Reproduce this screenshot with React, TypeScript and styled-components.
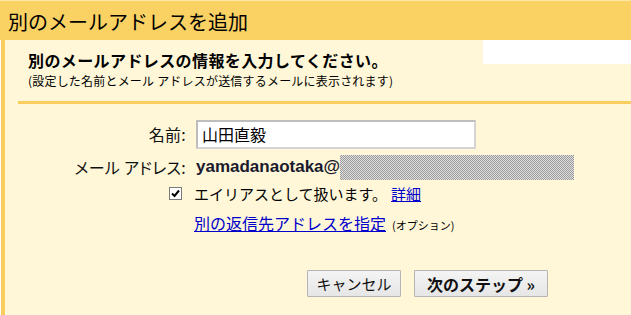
import React from "react";
import styled, { createGlobalStyle } from "styled-components";

const GlobalStyle = createGlobalStyle`
  html, body {
    margin: 0;
    padding: 0;
    background: #ffffff;
  }
  body {
    font-family: "Noto Sans CJK JP", "Liberation Sans", sans-serif;
    color: #000;
  }
`;

const Page = styled.div`
  width: 631px;
  height: 315px;
  overflow: hidden;
  display: flex;
  flex-direction: column;
`;

const Header = styled.header`
  height: 40px;
  flex: none;
  background: #fad163;
  border-top: 1px solid #fce7a6;
  box-sizing: border-box;
  padding: 2px 0 0 8px;
  display: flex;
  align-items: center;
`;

const Title = styled.h1`
  margin: 0;
  font-size: 20px;
  font-weight: 400;
  line-height: 26px;
`;

const Panel = styled.main`
  position: relative;
  flex: 1;
  margin-left: 1px;
  border-left: 4px solid #f9cd5e;
  background: #fff7d8;
  display: flex;
  flex-direction: column;
`;

const Redaction = styled.div`
  position: absolute;
  top: 0;
  right: 0;
  width: 148px;
  height: 24px;
  background: #ffffff;
`;

const Intro = styled.section`
  margin-left: 13px;
  padding: 10px 0 12px 10px;
  border-bottom: 3px solid #f9cd5e;
`;

const Heading = styled.h2`
  margin: 0;
  font-size: 16px;
  font-weight: 700;
  line-height: 20px;
  letter-spacing: 0.4px;
`;

const Note = styled.p`
  margin: 3px 0 0;
  font-size: 12px;
  line-height: 16px;
  letter-spacing: 0.2px;
`;

const Form = styled.div`
  display: grid;
  grid-template-columns: 181px 1fr;
  grid-template-rows: 30px 36px 16px 44px;
  column-gap: 9px;
  align-items: center;
  margin-top: 15px;
`;

const Label = styled.label`
  justify-self: end;
  font-size: 16px;
  line-height: 18px;
  font-feature-settings: "palt";
  letter-spacing: 0.3px;
  color: #111;
`;

const NameInput = styled.input`
  width: 280px;
  height: 29px;
  box-sizing: border-box;
  margin: 0 0 0 1px;
  padding: 0 4px;
  border: 2px solid #bdbdbd;
  border-right-color: #d4d4d4;
  border-bottom-color: #d4d4d4;
  background: #fff;
  font-family: inherit;
  font-size: 16px;
  color: #000;
  outline: none;
`;

const Value = styled.div`
  display: flex;
  align-items: center;
`;

const Email = styled.span`
  font-family: "Liberation Sans", Arial, sans-serif;
  font-weight: 700;
  font-size: 17px;
  color: #1a1a2e;
  margin-left: 1px;
`;

const Masked = styled.span`
  display: inline-block;
  width: 234px;
  height: 25px;
  background: repeating-conic-gradient(#9c9c9c 0 25%, #dedede 0 50%) 0 0 / 2px 2px;
`;

const CheckBox = styled.span`
  justify-self: end;
  margin-right: 4px;
  width: 13px;
  height: 13px;
  box-sizing: border-box;
  border: 1px solid #7a7a7a;
  background: #fff;
  display: flex;
  align-items: center;
  justify-content: center;
`;

const Text = styled.span`
  font-size: 15px;
  line-height: 18px;
  margin-right: 4px;
`;

const Link = styled.a<{ $size?: number }>`
  color: #0000cc;
  text-decoration: underline;
  font-size: ${(p) => p.$size ?? 15}px;
  cursor: pointer;
`;

const Small = styled.span`
  font-size: 11px;
  margin-left: 6px;
`;

const Row = styled.div`
  display: flex;
  align-items: baseline;
  margin-left: -1px;
`;

const Actions = styled.div`
  display: flex;
  gap: 13px;
  margin: 25px 0 0 302px;
`;

const Button = styled.button<{ $primary?: boolean; $width: number }>`
  width: ${(p) => p.$width}px;
  height: 27px;
  padding: 0;
  border: 1px solid #b4b4b4;
  border-radius: 1px;
  background: linear-gradient(#f4f4f4, #e6e6e6);
  font-family: inherit;
  font-size: ${(p) => (p.$primary ? 16 : 15)}px;
  font-weight: ${(p) => (p.$primary ? 700 : 400)};
  color: #111;
  cursor: pointer;
`;

export default function App() {
  return (
    <>
      <GlobalStyle />
      <Page>
        <Header>
          <Title>別のメールアドレスを追加</Title>
        </Header>
        <Panel>
          <Redaction />
          <Intro>
            <Heading>別のメールアドレスの情報を入力してください。</Heading>
            <Note>(設定した名前とメール アドレスが送信するメールに表示されます)</Note>
          </Intro>
          <Form>
            <Label>名前:</Label>
            <NameInput defaultValue="山田直毅" />
            <Label>メール アドレス:</Label>
            <Value>
              <Email>yamadanaotaka@</Email>
              <Masked />
            </Value>
            <CheckBox>
              <svg width="9" height="9" viewBox="0 0 9 9">
                <path d="M1 4.5 L3.5 7 L8 1.5" fill="none" stroke="#000" strokeWidth="2" />
              </svg>
            </CheckBox>
            <Row>
              <Text>エイリアスとして扱います。</Text>
              <Link $size={15}>詳細</Link>
            </Row>
            <span />
            <Row>
              <Link $size={16}>別の返信先アドレスを指定</Link>
              <Small>(オプション)</Small>
            </Row>
          </Form>
          <Actions>
            <Button $width={94}>キャンセル</Button>
            <Button $width={134} $primary>
              次のステップ »
            </Button>
          </Actions>
        </Panel>
      </Page>
    </>
  );
}
